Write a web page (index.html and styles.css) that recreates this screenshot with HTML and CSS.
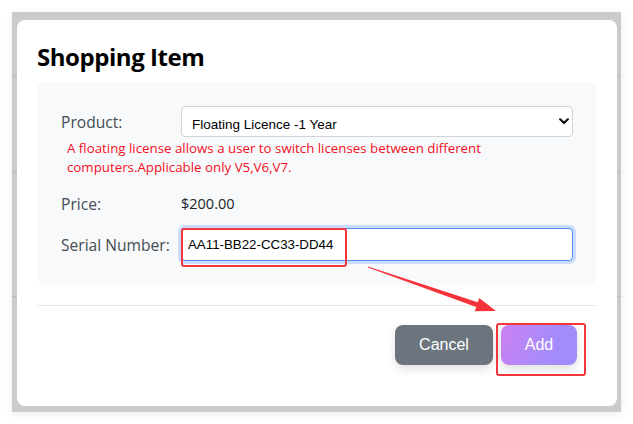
FILE: index.html
```html
<!DOCTYPE html>
<html>
<head>
<meta charset="utf-8">
<link rel="stylesheet" href="styles.css">
</head>
<body>
<div class="screen">
  <div class="frame">
    <div class="modal">
      <h1 class="title">Shopping Item</h1>
      <div class="panel">
        <div class="row">
          <label class="label">Product:</label>
          <div class="select-wrap">
            <select class="select">
              <option>Floating Licence -1 Year</option>
            </select>
            <svg class="chevron" width="10" height="7" viewBox="0 0 10 7"><path d="M1.2 1.3 L5 5 L8.8 1.3" fill="none" stroke="#111" stroke-width="2.2" stroke-linecap="round" stroke-linejoin="round"/></svg>
          </div>
        </div>
        <p class="hint">A floating license allows a user to switch licenses between different computers.Applicable only V5,V6,V7.</p>
        <div class="row row-price">
          <span class="label">Price:</span>
          <span class="value">$200.00</span>
        </div>
        <div class="row row-serial">
          <label class="label">Serial Number:</label>
          <input class="input" type="text" value="AA11-BB22-CC33-DD44">
        </div>
      </div>
      <div class="divider"></div>
      <div class="actions">
        <button class="btn btn-cancel">Cancel</button>
        <button class="btn btn-add">Add</button>
      </div>
    </div>
  </div>
  <div class="mark mark-serial"></div>
  <div class="mark mark-add"></div>
  <svg class="arrow" width="633" height="424" viewBox="0 0 633 424">
    <polygon points="368,266.6 477.8,302.2 479.2,298 496,311 474.8,311.2 476.2,307 368,267.6" fill="#f4333a"/>
  </svg>
</div>
</body>
</html>
```
FILE: styles.css
```css
* { box-sizing: border-box; }
html, body { margin: 0; padding: 0; background: #fff; }
body { font-family: "Open Sans", "Noto Sans", sans-serif; }

.screen {
  position: relative;
  width: 633px;
  height: 424px;
  padding: 12px;
}

.frame {
  background-color: #cbcbcb;
  background-image:
    linear-gradient(to bottom, transparent 64px, #bdbdbd 64px, #bdbdbd 65px, transparent 65px),
    linear-gradient(to bottom, transparent 160px, #bdbdbd 160px, #bdbdbd 161px, transparent 161px),
    linear-gradient(to bottom, transparent 284px, #bdbdbd 284px, #bdbdbd 285px, transparent 285px);
  padding: 8px 4px 6px 5px;
  height: 400px;
  box-shadow: 0 2px 8px rgba(0,0,0,0.08);
}

.modal {
  background: #fff;
  border-radius: 8px;
  height: 386px;
  padding: 22px 21px 0 20px;
}

.title {
  margin: 0 0 10px 0;
  font-size: 24px;
  line-height: 30px;
  font-weight: 700;
  color: #000;
  letter-spacing: -0.45px;
}

.panel {
  background: #f8f9fa;
  border-radius: 8px;
  padding: 24px 23px 24px 24px;
}

.row {
  display: grid;
  grid-template-columns: 120px 1fr;
  align-items: center;
}

.label {
  font-size: 15.6px;
  color: #454c53;
  font-weight: 500;
}

.value {
  font-size: 14.5px;
  color: #212529;
}

.select-wrap {
  position: relative;
}

.select {
  appearance: none;
  -webkit-appearance: none;
  display: block;
  width: 100%;
  height: 31px;
  border: 1px solid #ced4da;
  border-radius: 4px;
  background: #fff;
  font-family: "Liberation Sans", Arial, sans-serif;
  font-size: 13.5px;
  color: #000;
  padding: 6px 30px 0 10px;
  outline: none;
}

.chevron {
  position: absolute;
  right: 4px;
  top: 12px;
}

.hint {
  margin: 2px 0 0 6px;
  font-size: 13.3px;
  line-height: 19px;
  color: #f3101f;
}

.row-price {
  margin-top: 16px;
  line-height: 22px;
}

.row-serial {
  margin-top: 13px;
}

.input {
  display: block;
  width: 100%;
  height: 33px;
  border: 1px solid #4d8ef0;
  border-radius: 4px;
  box-shadow: 0 0 0 3px rgba(120, 165, 245, 0.35);
  background: #fff;
  font-family: "Liberation Sans", Arial, sans-serif;
  font-size: 13.3px;
  color: #000;
  padding: 0 6px;
  outline: none;
}

.divider {
  height: 1px;
  background: #e6e6e6;
  margin-top: 20px;
}

.actions {
  display: flex;
  justify-content: flex-end;
  gap: 8px;
  margin-top: 19px;
  padding-right: 19px;
}

.btn {
  height: 40px;
  border: none;
  border-radius: 8px;
  color: #fff;
  font-family: "Liberation Sans", Arial, sans-serif;
  font-size: 16px;
  box-shadow: 0 4px 10px rgba(0,0,0,0.12);
}

.btn-cancel {
  width: 98px;
  background: #6c757d;
}

.btn-add {
  width: 76px;
  background: linear-gradient(110deg, #cc80f2 0%, #a78bfa 60%, #a08cfb 100%);
}

.mark {
  position: absolute;
  border: 2px solid #f0383c;
  border-radius: 3px;
}

.mark-serial {
  left: 181px;
  top: 228px;
  width: 166px;
  height: 39px;
}

.mark-add {
  left: 496px;
  top: 323px;
  width: 90px;
  height: 53px;
}

.arrow {
  position: absolute;
  left: 0;
  top: 0;
  pointer-events: none;
}
```
